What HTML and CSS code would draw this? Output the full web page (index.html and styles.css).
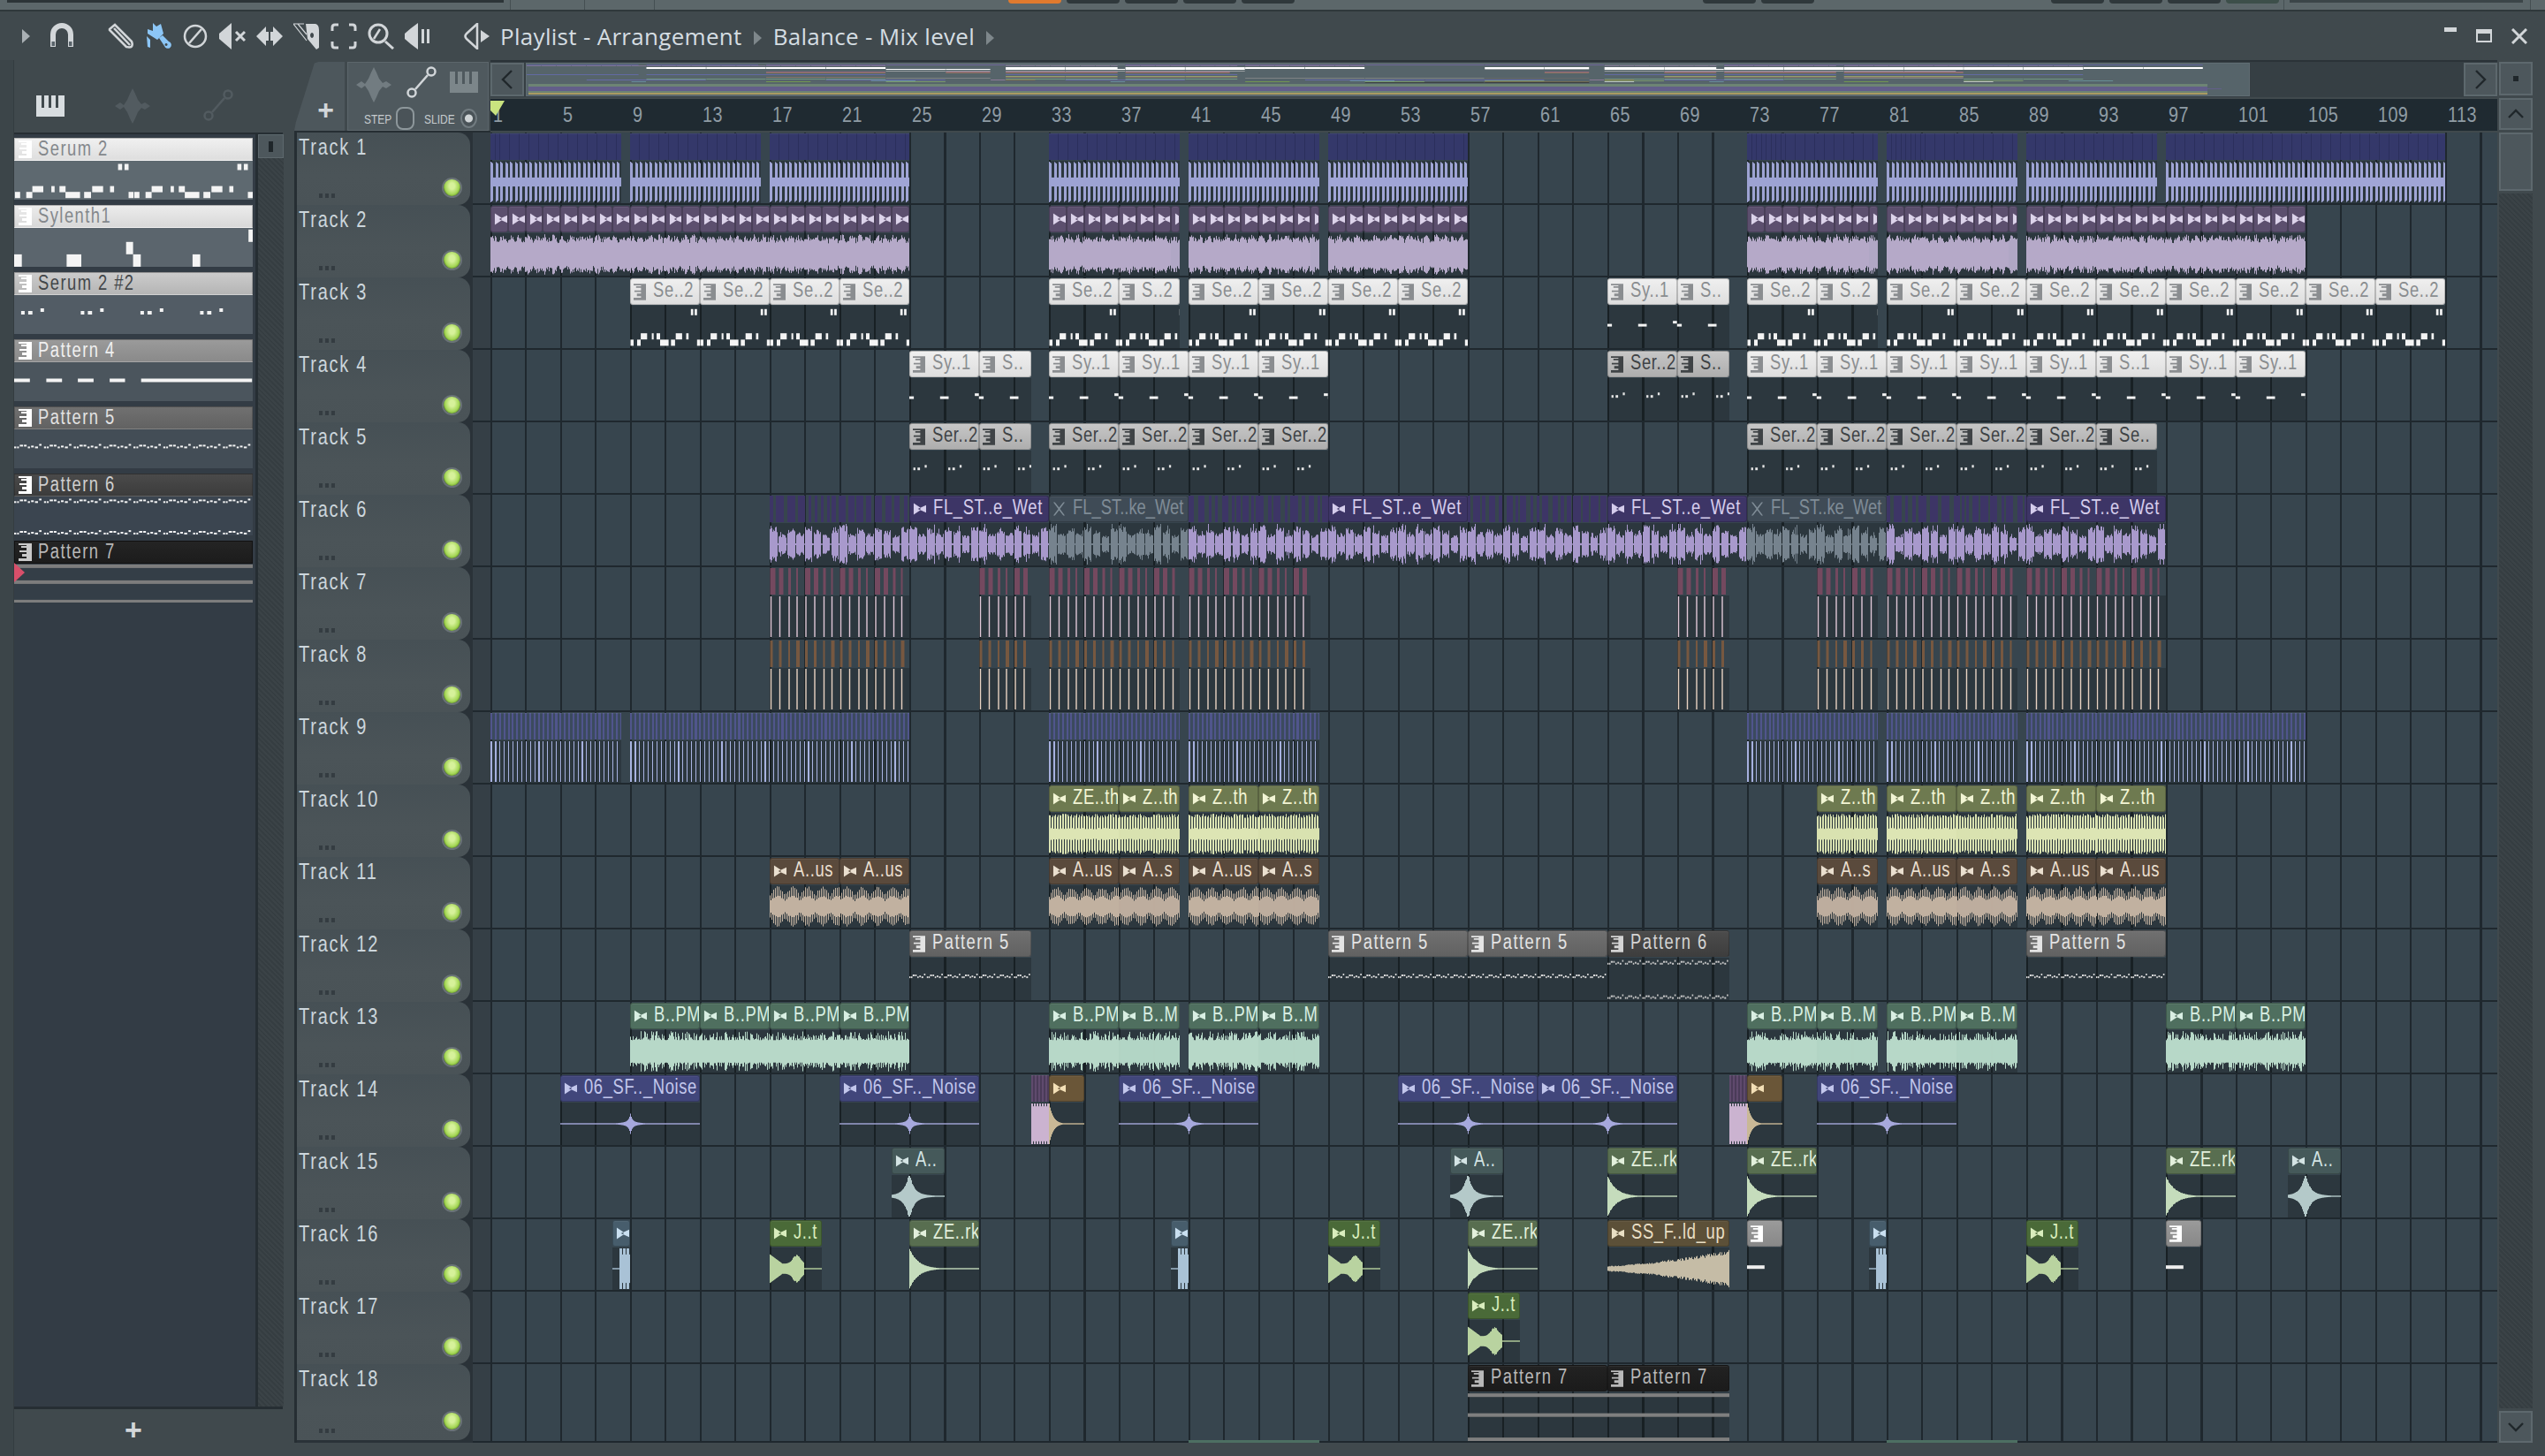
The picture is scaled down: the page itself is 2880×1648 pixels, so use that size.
FILE: index.html
```html
<!DOCTYPE html>
<html lang="en">
<head>
<meta charset="utf-8">
<title>Playlist - Arrangement</title>
<link rel="stylesheet" href="styles.css">
</head>
<body>
<svg class="defs" aria-hidden="true">
  <symbol id="i-audio" viewBox="0 0 16 16"><path d="M1 1V15L9 9.500V6.500ZM6 8 16 3.500V12.500Z"/></symbol>
  <symbol id="i-mute" viewBox="0 0 16 16"><path d="M1 0 3 0 8 6.500 13 0 15 0 9 8 15 16 13 16 8 9.500 3 16 1 16 7 8Z"/></symbol>
  <symbol id="i-piano" viewBox="0 0 15 20"><path d="M9 0H15V20H0V17H9V15H4V12H9V10H1V8H9V5H3V3H9V2H0V0Z"/></symbol>
  <symbol id="i-keys" viewBox="0 0 32 24"><path d="M0 0H6V14H9V0H14V14H17V0H22V14H25V0H32V24H0Z"/></symbol>
  <symbol id="i-wave" viewBox="0 0 40 40"><path d="M0 20 6 16 10 19 14 13 17 6 20 0 23 6 26 13 30 18 34 16 40 20 34 24 30 22 26 27 23 34 20 40 17 34 14 27 10 21 6 24Z"/></symbol>
  <symbol id="i-link" viewBox="0 0 34 36"><circle cx="6" cy="30" r="4.500"/><circle cx="28" cy="6" r="4.500"/><path d="M10 26 24 10"/></symbol>
</svg>
<div class="app">
  <div class="topstrip">
    <span class="inset inset-left"></span>
    <span class="sep sep-a"></span>
    <span class="sep sep-b"></span>
    <span class="sep sep-c"></span>
    <span class="tb tb-orange"></span><span class="tb"></span><span class="tb"></span><span class="tb"></span><span class="tb"></span>
    <span class="tb tb-far"></span><span class="tb"></span>
    <span class="tb tb-far2"></span><span class="tb"></span><span class="tb"></span><span class="tb tb-green"></span>
    <span class="sep sep-d"></span>
    <span class="inset inset-right"></span>
    <span class="sep sep-e"></span>
  </div>
  <header class="titlebar">
    <svg class="ic-caret" viewBox="0 0 9 16"><path d="M0 0 9 8 0 16Z"/></svg>
    <svg class="ic ic-magnet" viewBox="0 0 30 30"><path class="st6" d="M5 27V13a10 10 0 0 1 20 0V27"/><path class="hole" d="M3.500 21H7V26H3.500ZM23 21H26.500V26H23Z"/></svg>
    <div class="toolset">
      <svg class="ic" viewBox="0 0 30 30"><path class="st2" d="M2 7 8 2 27 21Q30 29 21 27L2 8ZM7 6 25 25"/></svg>
      <svg class="ic ic-blue" viewBox="0 0 30 30"><path d="M9 0 13 4 18 1 21 12 14 19 3 12 3 7 9 9ZM2 15 6 19 6 28 3 27ZM16 17 20 14 27 21A4 4 0 1 1 22 26ZM24 23A1.500 1.500 0 1 0 24.100 23Z"/></svg>
      <svg class="ic" viewBox="0 0 30 30"><circle class="st2" cx="15" cy="15" r="12"/><path class="st2" d="M22 7 8 23"/></svg>
      <svg class="ic" viewBox="0 0 30 30"><path d="M0 12 7 6 14 0V30L7 24 0 18Z"/><path class="st3" d="M19 10 29 20M29 10 19 20"/></svg>
      <svg class="ic" viewBox="0 0 30 30"><path d="M0 15 11 4V10H14V20H11V26ZM30 15 19 4V10H16V20H19V26Z"/></svg>
      <svg class="ic" viewBox="0 0 30 30"><path d="M14 1H25Q29 2 29 8V28L26 30 16 18ZM21 11A2 3 0 1 0 21.100 11Z" fill-rule="evenodd"/><path class="st1" d="M0 1H12M0 1 15 20M5 1 15 13"/></svg>
      <svg class="ic" viewBox="0 0 30 30"><path class="st3" d="M2 9V5Q2 2 5 2H9M21 2H25Q28 2 28 5V9M28 21V25Q28 28 25 28H21M9 28H5Q2 28 2 25V21"/></svg>
      <svg class="ic" viewBox="0 0 30 30"><circle class="st3" cx="12" cy="12" r="10"/><path class="st2" d="M7 18 14 7"/><path class="st3" d="M20 21 29 29"/></svg>
      <svg class="ic" viewBox="0 0 30 30"><path d="M0 12 7 6 15 0V30L7 24 0 18ZM19 7H22V23H19ZM25 7H28V23H25Z"/></svg>
    </div>
    <svg class="ic ic-output" viewBox="0 0 30 30"><path class="st2" d="M16 1 4 12Q1 15 4 18L16 29Z"/><path d="M20 8 30 15 20 22Z"/></svg>
    <span class="crumb">Playlist - Arrangement</span>
    <svg class="crumb-arrow" viewBox="0 0 9 16"><path d="M0 0 9 8 0 16Z"/></svg>
    <span class="crumb">Balance - Mix level</span>
    <svg class="crumb-arrow" viewBox="0 0 9 16"><path d="M0 0 9 8 0 16Z"/></svg>
    <div class="winbtns">
      <span class="win-min"></span>
      <span class="win-max"></span>
      <svg class="win-close" viewBox="0 0 18 18"><path d="M1 1 17 17M17 1 1 17"/></svg>
    </div>
  </header>
  <div class="work">
    <aside class="picker">
      <div class="picker-tools">
        <svg class="pt pt-keys"><use href="#i-keys"/></svg>
        <svg class="pt pt-wave"><use href="#i-wave"/></svg>
        <svg class="pt pt-link"><use href="#i-link"/></svg>
      </div>
      <div class="picker-list">
        <div class="items" id="items"></div>
        <div class="items-scroll"><div class="scroll-cap"><span></span></div></div>
      </div>
      <div class="picker-add">+</div>
    </aside>
    <main class="playlist">
      <div class="tabs">
        <div class="tab-plus">+</div>
        <div class="tab-tools">
          <div class="tab-icons">
            <svg class="tt tt-wave"><use href="#i-wave"/></svg>
            <svg class="tt tt-link"><use href="#i-link"/></svg>
            <svg class="tt tt-keys"><use href="#i-keys"/></svg>
          </div>
          <div class="tab-modes">
            <span class="mode">STEP</span><i class="check"></i><span class="mode slide">SLIDE</span><i class="radio"></i>
          </div>
        </div>
      </div>
      <div class="navrow">
        <button class="navbtn" type="button"><svg viewBox="0 0 14 24"><path d="M12 2 2 12 12 22"/></svg></button>
        <div class="minimap"><svg id="mini" width="1951" height="40" viewBox="0 0 1951 40"></svg></div>
        <div class="navfill"></div>
        <button class="navbtn" type="button"><svg viewBox="0 0 14 24"><path d="M2 2 12 12 2 22"/></svg></button>
      </div>
      <div class="ruler" id="ruler"></div>
      <div class="tracks" id="tracks"></div>
      <div class="lanes" id="lanes"></div>
      <div class="vscroll">
        <div class="vbtn vbtn-dot"><span></span></div>
        <div class="vbtn vbtn-up"><svg viewBox="0 0 20 12"><path d="M2 10 10 2 18 10"/></svg></div>
        <div class="vthumb"></div>
        <div class="vtrack"></div>
        <div class="vbtn vbtn-down"><svg viewBox="0 0 20 12"><path d="M2 2 10 10 18 2"/></svg></div>
      </div>
    </main>
  </div>
</div>
<script src="script.js"></script>
</body>
</html>
```
FILE: styles.css
```css
* { box-sizing: border-box; }
html, body { margin: 0; padding: 0; background: #40494d; }
body { width: 2880px; height: 1648px; overflow: hidden; font-family: "Liberation Sans", sans-serif; }
.defs { position: absolute; width: 0; height: 0; }
.app { width: 2880px; height: 1648px; display: flex; flex-direction: column; }

.topstrip { height: 13px; background: #5c676a; border-bottom: 2px solid #2f383b; display: flex; align-items: flex-start; flex: none; }
.inset { height: 3px; background: #2c3437; display: block; flex: none; }
.inset-left { width: 562px; margin-left: 8px; }
.inset-right { width: 264px; margin-left: 6px; height: 3px; background: #3b4548; }
.sep { width: 1px; height: 11px; background: #454f52; flex: none; }
.sep-a { margin-left: 7px; }
.sep-b { margin-left: 83px; }
.sep-c { margin-left: 78px; }
.sep-d { margin-left: 5px; }
.sep-e { margin-left: 8px; }
.tb { width: 60px; height: 4px; margin-left: 6px; background: #2f383b; border-radius: 0 0 5px 5px; flex: none; }
.tb-orange { background: #e07a2e; margin-left: 400px; }
.tb-far { margin-left: 462px; }
.tb-far2 { margin-left: 268px; }
.tb-green { background: #3d4f4a; }

.titlebar { height: 55px; flex: none; display: flex; align-items: center; padding-left: 25px; color: #d5dde2; }
.titlebar svg { fill: #d2d6d9; flex: none; }
.ic-caret { width: 9px; height: 16px; margin-right: 21px; fill: #a9b0b4 !important; }
.ic { width: 30px; height: 30px; }
.ic path.st1, .ic path.st2, .ic circle.st2, .ic path.st3, .ic circle.st3, .ic path.st6 { fill: none; stroke: #d2d6d9; }
.ic .st1 { stroke-width: 1.200; }
.ic .st2 { stroke-width: 2.500; }
.ic .st3 { stroke-width: 3; }
.ic .st6 { stroke-width: 6; }
.ic .hole { fill: #59636a; }
.ic-magnet { margin-right: 37px; }
.toolset { display: flex; gap: 12px; }
.ic-blue path { fill: #8cc6f6; }
.ic-output { margin-left: 36px; margin-right: 12px; }
.crumb { font-family: "Open Sans", "Liberation Sans", sans-serif; font-size: 26px; line-height: 30px; white-space: nowrap; letter-spacing: .3px; }
.crumb-arrow { width: 9px; height: 16px; margin: 4px 13px 0; fill: #7e878b !important; }
.winbtns { margin-left: auto; margin-right: 20px; display: flex; align-items: center; gap: 22px; }
.win-min { width: 14px; height: 5px; background: #d2d6d9; margin-bottom: 14px; }
.win-max { width: 18px; height: 15px; border: 2px solid #d2d6d9; border-top-width: 5px; }
.win-close { width: 18px; height: 18px; fill: none !important; stroke: #d2d6d9; stroke-width: 3; }

.work { flex: 1; display: flex; min-height: 0; }

.picker { width: 333px; flex: none; padding-left: 16px; display: flex; flex-direction: column; background: linear-gradient(90deg, #3c4549 0 15px, #343c40 15px 16px, #40494d 16px); }
.picker-tools { height: 82px; flex: none; display: flex; align-items: flex-start; padding: 40px 0 0 25px; }
.pt-keys { width: 32px; height: 24px; fill: #d8dde0; }
.pt-wave { width: 40px; height: 40px; margin: -8px 0 0 57px; fill: #525b60; }
.pt-link { width: 34px; height: 36px; margin: -7px 0 0 60px; fill: none; stroke: #525b60; stroke-width: 2.500; }
.picker-list { height: 1445px; width: 304px; flex: none; display: flex; border-top: 2px solid #262e33; border-bottom: 3px solid #262e33; border-right: 2px solid #262e33; background: #333c45; position: relative; }
.items { width: 270px; flex: none; }
.items-scroll { width: 32px; flex: none; border-left: 3px solid #262e33; background: repeating-linear-gradient(45deg, #3b4347 0 2px, #353d41 2px 4px); margin-left: 3px; }
.scroll-cap { height: 27px; background: #4d575c; border: 1px solid #5d686d; display: flex; align-items: center; justify-content: center; }
.scroll-cap span { width: 5px; height: 12px; background: #1f262a; }
.picker-add { flex: 1; width: 270px; padding-bottom: 6px; display: flex; align-items: center; justify-content: center; color: #d2d6d9; font: bold 34px "Liberation Sans", sans-serif; }

.lbl { display: inline-block; transform: scaleX(.8); transform-origin: 0 50%; white-space: nowrap; }

.item { height: 76px; padding-top: 4px; }
.item-head { height: 26px; display: flex; align-items: center; padding-left: 4px; gap: 7px; font-size: 23px; letter-spacing: 1.800px; border: 1px solid rgba(0,0,0,.18); border-bottom-color: rgba(255,255,255,.12); overflow: hidden; padding-bottom: 2px; }
.item-head svg { width: 15px; height: 20px; flex: none; fill: currentColor; }
.item-icon { color: #fff; display: flex; padding-top: 2px; }
.item-body { display: block; width: 270px; height: 44px; }
.ih-1 { background: linear-gradient(#f0f0f0, #dedede); color: #84888c; }
.ih-2 { background: linear-gradient(#ececec, #d8d8d8); color: #84888c; }
.ih-3 { background: linear-gradient(#cbcbcb, #b5b5b5); color: #43474a; }
.ih-4 { background: linear-gradient(#9a9a9a, #8a8a8a); color: #f0f0f0; }
.ih-5 { background: linear-gradient(#707070, #626262); color: #e2e2e2; }
.ih-6 { background: linear-gradient(#4a4a4a, #3c3c3c); color: #cfcfcf; }
.ih-7 { background: linear-gradient(#242424, #1c1c1c); color: #b8b8b8; border-color: #111; }
.ih-7 .item-icon { color: #c9c9c9; }
.ib-1 { background: #5e6970; }
.ib-2 { background: #5b656d; }
.ib-3 { background: #525c65; }
.ib-4 { background: #4b555d; }
.ib-5 { background: #434d56; }
.ib-6 { background: #3b4550; }
.ib-7 { background: #343e47; }
.item-marker { position: absolute; left: 0; top: 485px; width: 12px; height: 22px; background: #d84f6a; clip-path: polygon(0 0, 100% 50%, 0 100%); }

.playlist { flex: 1; display: grid; grid-template-columns: 222px 2271px 2px 38px 14px; grid-template-rows: 44px 38px 1483px 1fr; min-width: 0; }
.tabs { grid-column: 1; grid-row: 1 / span 2; display: flex; padding-top: 2px; gap: 3px; border-bottom: 2px solid #262e33; }
.tab-plus { width: 57px; background: #4d575c; clip-path: polygon(0 100%, 3% 88%, 40% 2%, 48% 0, 100% 0, 100% 100%); color: #d2d6d9; font: bold 32px "Liberation Sans", sans-serif; display: flex; align-items: flex-end; justify-content: center; padding: 0 0 7px 14px; line-height: 34px; }
.tab-tools { width: 160px; background: #4f595e; border: 1px solid #5c666b; display: flex; flex-direction: column; padding: 5px 0 0 0; }
.tab-icons { display: flex; align-items: flex-start; height: 46px; padding-left: 9px; }
.tt-wave { width: 40px; height: 40px; fill: #727c81; }
.tt-link { width: 34px; height: 36px; margin-left: 17px; fill: none; stroke: #d2d6d9; stroke-width: 2.500; margin-top: -1px; }
.tt-keys { width: 32px; height: 24px; margin-left: 15px; margin-top: 5px; fill: #7c868a; }
.tab-modes { display: flex; align-items: center; height: 26px; padding-left: 18px; color: #c5cbce; font-size: 15px; }
.mode { width: 31px; flex: none; display: block; transform: scaleX(.8); transform-origin: 0 50%; white-space: nowrap; }
.check { width: 21px; height: 26px; flex: none; border: 2px solid #8d979b; border-radius: 8px; margin-left: 5px; background: #4a5358; }
.slide { margin-left: 11px; width: 32px; }
.radio { width: 19px; height: 22px; flex: none; border-radius: 50%; border: 2px solid #727c81; margin-left: 9px; background: radial-gradient(circle, #cfd4d6 0 4px, #4a5358 5px); }

.navrow { grid-column: 2; grid-row: 1; display: flex; height: 42px; background: #363f44; border-top: 2px solid #2b3338; }
.navbtn { width: 38px; height: 38px; margin: 1px 0 0; padding: 0; background: #4d575c; border: 2px solid #5d686d; display: flex; align-items: center; justify-content: center; flex: none; }
.navbtn svg, .vbtn svg { width: 14px; height: 24px; fill: none; stroke: #20272b; stroke-width: 2.400; }
.minimap { width: 1951px; height: 38px; margin: 1px 0 0 2px; background: #56646a; border: 1px solid #5f6c72; overflow: hidden; flex: none; }
.minimap svg { display: block; }
.navfill { flex: 1; }

.ruler { grid-column: 2; grid-row: 2; height: 36px; background: #1f2a31; display: flex; position: relative; color: #8f9ca5; font-size: 23px; line-height: 36px; }
.tick { flex: 0 0 79px; padding-left: 3px; }
.tick .lbl { transform: scaleX(.86); letter-spacing: .5px; }
.marker { position: absolute; left: 0; top: 2px; width: 16px; height: 17px; background: #c9e37f; clip-path: polygon(0 0, 100% 0, 38% 100%, 0 65%); }

.tracks { grid-column: 1; grid-row: 3; display: flex; flex-direction: column; background: #2a3238; border-left: 3px solid #262e33; }
.track { height: 82px; flex: none; display: flex; background: #2a3238; }
.track-name { width: 196px; flex: none; position: relative; background: linear-gradient(#465055, #4b5458 60%, #4a5357); border-radius: 0 14px 14px 0; padding: 1px 0 0 2px; color: #ccd6dc; font-size: 25px; line-height: 30px; letter-spacing: 2.200px; }
.track-dots { position: absolute; left: 25px; bottom: 8px; display: flex; gap: 3px; }
.track-dots i { width: 4px; height: 5px; background: #343c41; }
.led { position: absolute; right: 9px; bottom: 8px; width: 23px; height: 23px; border-radius: 50%; border: 2px solid #6a7377; background: radial-gradient(ellipse at 50% 40%, #d6f19a 0 22%, #a4d655 58%, #7fb23a 68%, #1f2b14 80%); }
.track-strip { flex: 1; background: linear-gradient(#1f282e, #1f282e) bottom / 100% 2px no-repeat, #353f46; margin-left: 3px; }
.track-last { height: 89px; }
.track-last .led { bottom: 10px; }
.track-last .track-name { height: 86px; }

.lanes { grid-column: 2; grid-row: 3; display: flex; flex-direction: column; overflow: hidden; }
.lane { height: 82px; flex: none; position: relative; background:
    linear-gradient(#1f282e, #1f282e) left bottom / 100% 2px no-repeat,
    repeating-linear-gradient(90deg, #1f282e 0 2px, transparent 2px 39.500px),
    #37454e; }
.lane-last { height: 89px; }

.clip { position: absolute; top: 0; bottom: 2px; display: flex; flex-direction: column; --ls: .8px; }
.clip-head { height: 30px; flex: none; margin-top: 1px; background: var(--hd); border: 1px solid rgba(0,0,0,.2); border-radius: 3px; display: flex; align-items: center; overflow: hidden; padding: 0 0 3px 3px; gap: 8px; color: var(--fg); font-size: 23px; letter-spacing: var(--ls); white-space: nowrap; box-shadow: inset 0 1px 0 rgba(255,255,255,.06); }
.clip-head > svg { width: 15px; height: 16px; flex: none; fill: currentColor; margin-top: 3px; }
.clip-head.piano > svg { width: 14px; height: 19px; }
.clip-body { flex: 1; display: block; background: rgba(0,0,0,.2); margin-top: 1px; width: 100%; min-height: 0; }
.clip-body path { stroke: var(--wave); stroke-width: 1; fill: none; }
.clip-body path.thick { stroke-width: 1.400; }
.clip-body rect { fill: var(--wave); }
.clip-strip { height: 30px; flex: none; margin-top: 1px; display: block; width: 100%; }
.clip-strip rect { fill: var(--hd); }

.c-t1 { --hd: #34386a; --wave: #a0a5d6; }
.c-t2 { --hd: #5c4f6e; --fg: #dcd3ea; --wave: #b5a9c8; }
.c-wh { --hd: linear-gradient(#efefef, #dedede); --fg: #8a8d90; --wave: #f4f4f4; }
.c-gr { --hd: linear-gradient(#c6c6c6, #aeaeae); --fg: #3f4346; --wave: #e6e6e6; }
.c-t6 { --hd: #3d3566; --fg: #d5cdec; --wave: #a899cc; }
.c-mute { --hd: #3f4b56; --fg: #7f8c96; --wave: #76838e; --ls: 0; }
.c-t7 { --hd: #74495f; --wave: #e0c8d8; }
.c-t8 { --hd: #775840; --wave: #e8d3c3; }
.c-t9 { --hd: #474c82; --wave: #a9b4e2; }
.c-t10 { --hd: #6e7a50; --fg: #f2f5d4; --wave: #dde5b4; }
.c-t11 { --hd: #5a4a3c; --fg: #eadfcf; --wave: #c1b1a0; }
.c-p5 { --hd: linear-gradient(#707070, #626262); --fg: #e4e4e4; --wave: #d8d8d8; --ls: 1.800px; }
.c-p6 { --hd: linear-gradient(#4c4c4c, #3e3e3e); --fg: #d4d4d4; --wave: #c8c8c8; --ls: 1.800px; }
.c-p7 { --hd: linear-gradient(#222, #1b1b1b); --fg: #b8b8b8; --wave: #7f7f7f; --ls: 1.800px; }
.c-p4 { --hd: linear-gradient(#9a9a9a, #888); --fg: #fff; --wave: #eee; }
.c-t13 { --hd: #4f6f5f; --fg: #d9efe3; --wave: #b7d8c8; }
.c-t14 { --hd: #41467b; --fg: #c2c6ec; --wave: #a6a8dc; }
.c-pk { --hd: #5f4a6d; --wave: #cbb3d0; }
.c-br { --hd: #6a5638; --fg: #f3dfb6; --wave: #c9b896; }
.c-a { --hd: #45595a; --fg: #d4e4e4; --wave: #b4c9c9; }
.c-ze { --hd: #586e50; --fg: #e3f0dc; --wave: #c5dcbc; }
.c-j { --hd: #4a6a38; --fg: #d9edbd; --wave: #b9d3a0; }
.c-ss { --hd: #5c5038; --fg: #e9dfc4; --wave: #c5bca6; }
.c-bl { --hd: #475d6c; --fg: #c9dff0; --wave: #a9c2d6; }
.peek { top: auto; bottom: 0; height: 3px; background: #4d6f62; }

.head-t1 { background: repeating-linear-gradient(90deg, #34386a 0 4.900px, #2b2f5c 4.900px 5.500px); border: 0; border-radius: 0; }
.head-t9 { background: repeating-linear-gradient(90deg, #50558c 0 2px, #3b4a5e 2px 4.900px); border: 0; border-radius: 0; }
.head-pk { background: repeating-linear-gradient(90deg, #5f4a6d 0 2px, #4a3b58 2px 4px); border: 0; border-radius: 0; }

.vscroll { grid-column: 4; grid-row: 1 / span 3; display: flex; flex-direction: column; gap: 3px; padding-top: 2px; }
.vbtn { background: #4d575c; border: 2px solid #5d686d; display: flex; align-items: center; justify-content: center; flex: none; }
.vbtn svg { width: 20px; height: 12px; }
.vbtn-dot { height: 38px; }
.vbtn-dot span { width: 6px; height: 6px; background: #20272b; }
.vbtn-up { height: 36px; }
.vthumb { height: 66px; background: #4d575c; border: 2px solid #5d686d; flex: none; }
.vtrack { flex: 1; background: repeating-linear-gradient(45deg, #3b4347 0 2px, #353d41 2px 4px); }
.vbtn-down { height: 36px; }
```
FILE: script.js
```js
(function () {
  var BAR = 19.75;
  var seed = 7;
  function rnd() { seed = (seed * 16807) % 2147483647; return (seed & 0xffff) / 65536; }
  function svgIcon(id) { return '<svg><use href="#' + id + '"/></svg>'; }

  /* ---- pattern previews: notes are [startBar, endBar, yFrac, heightPx] ---- */
  function zs(list, origin, scale, y, h) {
    return list.map(function (n) { return [(n[0] - origin) * scale, (n[1] - origin) * scale, n[2] === undefined ? y : n[2], h]; });
  }
  var stipple = [[0, .07, 0], [.1, .16, 0], [.19, .3, -2], [.33, .42, -2], [.46, .53, 0], [.57, .66, -1], [.7, .8, 0], [.84, .92, -3]];
  function stip(y) { return stipple.map(function (n) { return [n[0], n[1], y + n[2] / 46, 2]; }); }
  var SYL = [[40, 62], [190, 232], [360, 380], [380, 402], [550, 572], [710, 722]];
  var SYLY = [.68, .68, .36, .68, .68, .04];
  var PATTERNS = {
    serum: { len: 4, notes: zs([[292, 302, .08], [308, 318, .08]], 35, 4 / 295, 0, 7).concat(
      zs([[37, 50, .8], [65, 80, .8], [80, 107, .65], [127, 135, .65], [147, 162, .65], [162, 198, .8], [208, 225, .8], [228, 255, .65], [272, 282, .65], [318, 330, .8]], 35, 4 / 295, 0, 7)) },
    syl: { len: 8, notes: zs(SYL.map(function (n, i) { return [n[0], n[1], SYLY[i]]; }), 40, 8 / 682, 0, 14) },
    sylClip: { len: 4, notes: zs(SYL.map(function (n, i) { return [n[0], n[1], .28 + SYLY[i] * .22]; }), 40, 8 / 682, 0, 3) },
    serum2: { len: 2, notes: zs([[60, 70, .41], [80, 92, .41], [115, 125, .34]], 40, 2 / 170, 0, 4) },
    serum2Clip: { len: 2, notes: zs([[60, 70, .4], [80, 92, .4], [115, 125, .34]], 40, 2 / 170, 0, 3) },
    p4: { len: 8, notes: zs([[40, 85], [132, 177], [222, 267], [313, 357], [403, 720]], 40, 8 / 682, .42, 4) },
    p4Clip: { len: 8, notes: [[0, 1, .42, 4]] },
    p5: { len: 1, notes: stip(.44) },
    p6: { len: 1, notes: stip(.12).concat(stip(.93)) },
    p7: { len: 8, notes: [[0, 8, .02, 4], [0, 8, .43, 4], [0, 8, .93, 4]] }
  };
  function patternRects(p, w, pxBar, h) {
    var out = '', loop = p.len * pxBar;
    for (var l = 0; l * loop < w; l++) {
      p.notes.forEach(function (n) {
        var x = l * loop + n[0] * pxBar, nw = Math.max(1.5, (n[1] - n[0]) * pxBar);
        if (x >= w) return;
        if (x + nw > w) nw = w - x;
        out += '<rect x="' + x.toFixed(1) + '" y="' + (n[2] * h).toFixed(1) + '" width="' + nw.toFixed(1) + '" height="' + n[3] + '"/>';
      });
    }
    return out;
  }

  /* ---- audio shapes: amplitude 0..1 per pixel column ---- */
  var WAVES = {
    fingers: function (x) { var p = (x % 5.5) / 5.5; return p < .5 ? 1 - .2 * p : .22; },
    dense: function (x) { var r = rnd(); return .62 + .08 * Math.sin(x / 1.57) + .3 * r; },
    comb: function (x) { return (x % 4.9) < 1.1 ? 1 : 0; },
    pulse: function (x) { return ((x % 3) < 1.5 ? 1 : .3) * (.8 + .2 * rnd()); },
    burst: function (x) { return (.55 + .45 * Math.abs(Math.sin(Math.PI * x / 17))) * (x % 2 < 1 ? 1 : .55) * (.85 + .15 * rnd()); },
    noise: function (x) { var r = rnd(); return .55 + .45 * r * r; },
    noiseHit: function (x, w) { var d = Math.abs(x - w / 2); return Math.max(.03, Math.exp(-d / 2) * .36 + Math.exp(-d / 11) * .14); },
    star: function (x, w) { var d = Math.abs(x - w * .33); return Math.max(.03, Math.exp(-d / 4.5) * (.85 + .15 * rnd()) + Math.exp(-d / 14) * .25); },
    decay: function (x) { return Math.max(.03, Math.exp(-x / 10) * (.9 + .1 * rnd())); },
    decayFast: function (x) { return Math.max(.03, Math.exp(-x / 4.5)); },
    jt: function (x) { if (x > 38) return .03; if (x < 14) return .7 - .032 * x; return .25 + .45 * Math.exp(-Math.pow((x - 30) / 6, 2)) * (.8 + .2 * rnd()); },
    riser: function (x, w) { return (.14 + .8 * Math.pow(x / w, 1.4)) * (.72 + .28 * rnd()); },
    solid: function (x) { return x % 3 < 2 ? 1 : .86; },
    sliver: function (x, w) { return x > w * .4 ? (x % 4 < 3 ? 1 : .7) : .03; },
    fl: function (x) {
      var i = Math.floor(x / 9.875), f = (x % 9.875) / 9.875;
      var gate = [1, .55, .85, .6, 1, .75, .5, .9][i % 8];
      return Math.max(.03, (f < .85 ? 1 : .06) * gate * (.62 + .38 * rnd()) * (rnd() > .9 ? 1.3 : .95));
    }
  };
  function wavePath(kind, w, h) {
    var fn = WAVES[kind], d = '', mid = h / 2, amp = h / 2 - 1;
    for (var x = 0; x < w; x++) {
      var a = Math.min(1, fn(x, w));
      if (a <= 0) continue;
      var t = Math.max(.5, a * amp);
      d += 'M' + (x + .5) + ' ' + (mid - t).toFixed(1) + 'V' + (mid + t).toFixed(1);
    }
    return '<path d="' + d + '"/>';
  }
  function hitsPath(w, h, widths) {
    var d = '', rects = '', i = 0;
    for (;; i++) {
      var x = [0, 10, 20.5, 29.5][i % 4] + 39.5 * Math.floor(i / 4) + .5;
      if (x >= w) break;
      rects += '<rect x="' + x + '" y="0" width="' + widths[i % 4] + '" height="30"/>';
      d += 'M' + (x + 1) + ' 1V' + (h - 1);
    }
    return { rects: rects, wave: '<path class="thick" d="' + d + '"/>' };
  }
  function flRects(w) {
    var r = '', x = 0;
    while (x < w) {
      var n = 3 + Math.floor(rnd() * 7);
      r += '<rect x="' + x.toFixed(1) + '" y="0" width="' + n + '" height="30"/>';
      x += n + 2 + Math.floor(rnd() * 4);
    }
    return r;
  }

  /* ---- clip data: [startBar, endBar, label, style, kind] ---- */
  function seq(style, kind, list) {
    return list.map(function (c) { return [c[0], c[1], c[2], style, kind]; });
  }
  function range(a, b, step, label) { var o = []; for (var i = a; i < b; i += step) o.push([i, Math.min(b, i + step), label]); return o; }
  var SE = 'Se..2', SY = 'Sy..1', SR = 'Ser..2', ZT = 'Z..th', AU = 'A..us', AS = 'A..s', BP = 'B..PM', BM = 'B..M', NO = '06_SF.._Noise', ZR = 'ZE..rk', JT = 'J..t';
  var FL = 'FL_ST..e_Wet', FM = 'FL_ST..ke_Wet';
  var TRACKS = [
    [[0, 7.5], [8, 15.5], [16, 24], [32, 39.5], [40, 47.5], [48, 56], [72, 79.5], [80, 87.5], [88, 95.5], [96, 112]].map(function (r) { return [r[0], r[1], null, 'c-t1', 'fingers', 'head-t1']; }),
    seq('c-t2', 'dense', range(0, 24, 1, '').concat(range(32, 39.5, 1, ''), range(40, 47.5, 1, ''), range(48, 56, 1, ''), range(72, 79.5, 1, ''), range(80, 87.5, 1, ''), range(88, 104, 1, ''))),
    seq('c-wh', 'p:serum', [[8, 12, SE], [12, 16, SE], [16, 20, SE], [20, 24, SE], [32, 36, SE], [36, 39.5, 'S..2'], [40, 44, SE], [44, 48, SE], [48, 52, SE], [52, 56, SE]]).concat(
      seq('c-wh', 'p:sylClip', [[64, 68, SY], [68, 71, 'S..']]),
      seq('c-wh', 'p:serum', [[72, 76, SE], [76, 79.5, 'S..2'], [80, 84, SE], [84, 88, SE], [88, 92, SE], [92, 96, SE], [96, 100, SE], [100, 104, SE], [104, 108, SE], [108, 112, SE]])),
    seq('c-wh', 'p:sylClip', [[24, 28, SY], [28, 31, 'S..'], [32, 36, SY], [36, 40, SY], [40, 44, SY], [44, 48, SY]]).concat(
      seq('c-gr', 'p:serum2Clip', [[64, 68, SR], [68, 71, 'S..']]),
      seq('c-wh', 'p:sylClip', [[72, 76, SY], [76, 80, SY], [80, 84, SY], [84, 88, SY], [88, 92, SY], [92, 96, 'S..1'], [96, 100, SY], [100, 104, SY]])),
    seq('c-gr', 'p:serum2Clip', [[24, 28, SR], [28, 31, 'S..'], [32, 36, SR], [36, 40, SR], [40, 44, SR], [44, 48, SR], [72, 76, SR], [76, 80, SR], [80, 84, SR], [84, 88, SR], [88, 92, SR], [92, 95.5, 'Se..']]),
    [[16, 24, null, 'c-t6', 'fl', 'fl'], [24, 32, FL, 'c-t6', 'fl'], [32, 40, FM, 'c-mute', 'fl'], [40, 48, null, 'c-t6', 'fl', 'fl'], [48, 56, FL, 'c-t6', 'fl'], [56, 64, null, 'c-t6', 'fl', 'fl'], [64, 72, FL, 'c-t6', 'fl'], [72, 80, FM, 'c-mute', 'fl'], [80, 88, null, 'c-t6', 'fl', 'fl'], [88, 96, FL, 'c-t6', 'fl']],
    [[16, 24], [28, 31], [32, 39.5], [40, 47], [68, 71], [76, 79.5], [80, 87.5], [88, 96]].map(function (r) { return [r[0], r[1], null, 'c-t7', 'hits', [6, 5, 3, 2]]; }),
    [[16, 24], [28, 31], [32, 39.5], [40, 47], [68, 71], [76, 79.5], [80, 87.5], [88, 96]].map(function (r) { return [r[0], r[1], null, 'c-t8', 'hits', [3, 3, 2, 4]]; }),
    [[0, 7.5], [8, 24], [32, 39.5], [40, 47.5], [72, 79.5], [80, 87.5], [88, 104]].map(function (r) { return [r[0], r[1], null, 'c-t9', 'comb', 'head-t9']; }),
    seq('c-t10', 'pulse', [[32, 36, 'ZE..th'], [36, 39.5, ZT], [40, 44, ZT], [44, 47.5, ZT], [76, 79.5, ZT], [80, 84, ZT], [84, 87.5, ZT], [88, 92, ZT], [92, 96, ZT]]),
    seq('c-t11', 'burst', [[16, 20, AU], [20, 24, AU], [32, 36, AU], [36, 39.5, AS], [40, 44, AU], [44, 47.5, AS], [76, 79.5, AS], [80, 84, AU], [84, 87.5, AS], [88, 92, AU], [92, 96, AU]]),
    seq('c-p5', 'p:p5', [[24, 31, 'Pattern 5'], [48, 56, 'Pattern 5'], [56, 64, 'Pattern 5'], [88, 96, 'Pattern 5']]).concat(seq('c-p6', 'p:p6', [[64, 71, 'Pattern 6']])),
    seq('c-t13', 'noise', [[8, 12, BP], [12, 16, BP], [16, 20, BP], [20, 24, BP], [32, 36, BP], [36, 39.5, BM], [40, 44, BP], [44, 47.5, BM], [72, 76, BP], [76, 79.5, BM], [80, 84, BP], [84, 87.5, BM], [96, 100, BP], [100, 104, BP]]),
    seq('c-t14', 'noiseHit', [[4, 12, NO], [20, 28, NO], [36, 44, NO], [52, 60, NO], [60, 68, NO], [76, 84, NO]]).concat(
      [[31, 32, null, 'c-pk', 'solid', 'head-pk'], [71, 72, null, 'c-pk', 'solid', 'head-pk']],
      seq('c-br', 'decayFast', [[32, 34, ''], [72, 74, '']])),
    seq('c-a', 'star', [[23, 26, 'A..'], [55, 58, 'A..'], [103, 106, 'A..']]).concat(seq('c-ze', 'decay', [[64, 68, ZR], [72, 76, ZR], [96, 100, ZR]])),
    seq('c-bl', 'sliver', [[7, 8, ''], [39, 40, ''], [79, 80, '']]).concat(
      seq('c-j', 'jt', [[16, 19, JT], [48, 51, JT], [88, 91, JT]]),
      seq('c-ze', 'decay', [[24, 28, ZR], [56, 60, ZR]]),
      seq('c-ss', 'riser', [[64, 71, 'SS_F..ld_up']]),
      seq('c-p4', 'p:p4Clip', [[72, 74, ''], [96, 98, '']])),
    seq('c-j', 'jt', [[56, 59, JT]]),
    seq('c-p7', 'p:p7', [[56, 64, 'Pattern 7'], [64, 71, 'Pattern 7']])
  ];

  function lbl(t) { return t ? '<span class="lbl">' + t + '</span>' : ''; }

  /* ---- sidebar ---- */
  var items = [['Serum 2', 'serum'], ['Sylenth1', 'syl'], ['Serum 2 #2', 'serum2'], ['Pattern 4', 'p4'], ['Pattern 5', 'p5'], ['Pattern 6', 'p6'], ['Pattern 7', 'p7']];
  document.getElementById('items').innerHTML = items.map(function (it, i) {
    var n = i + 1;
    return '<div class="item"><div class="item-head ih-' + n + '"><span class="item-icon">' + svgIcon('i-piano') + '</span>' + lbl(it[0]) + '</div>' +
      '<svg class="item-body ib-' + n + '" viewBox="0 0 270 44"><g fill="' + (n === 7 ? '#7d7d7d' : '#f4f4f4') + '">' + patternRects(PATTERNS[it[1]], 270, 33.75, 44) + '</g></svg></div>';
  }).join('') + '<div class="item-marker"></div>';

  /* ---- ruler ---- */
  var rh = '';
  for (var b = 1; b <= 113; b += 4) rh += '<span class="tick">' + lbl(String(b)) + '</span>';
  document.getElementById('ruler').innerHTML = rh + '<i class="marker"></i>';

  /* ---- tracks + lanes ---- */
  var th = '', lh = '';
  TRACKS.forEach(function (clips, i) {
    var last = i === TRACKS.length - 1;
    th += '<div class="track' + (last ? ' track-last' : '') + '"><div class="track-name">' + lbl('Track ' + (i + 1)) +
      '<span class="track-dots"><i></i><i></i><i></i></span><span class="led"></span></div><div class="track-strip"></div></div>';
    var lane = '';
    clips.forEach(function (c) {
      var w = (c[1] - c[0]) * BAR, left = c[0] * BAR, st = c[3], kind = c[4], extra = c[5];
      var H = last ? 54 : 48, body, head;
      var vb = '" viewBox="0 0 ' + w.toFixed(2) + ' ' + H + '" preserveAspectRatio="none">';
      if (kind === 'hits') {
        var hp = hitsPath(w, H, extra);
        head = '<svg class="clip-strip" viewBox="0 0 ' + w.toFixed(2) + ' 30">' + hp.rects + '</svg>';
        body = hp.wave;
      } else {
        if (extra === 'fl') head = '<svg class="clip-strip" viewBox="0 0 ' + w.toFixed(2) + ' 30">' + flRects(w) + '</svg>';
        else if (extra) head = '<div class="clip-head ' + extra + '"></div>';
        else if (kind.indexOf('p:') === 0) head = '<div class="clip-head piano">' + svgIcon('i-piano') + lbl(c[2]) + '</div>';
        else head = '<div class="clip-head">' + svgIcon(st === 'c-mute' ? 'i-mute' : 'i-audio') + lbl(c[2]) + '</div>';
        body = kind.indexOf('p:') === 0 ? patternRects(PATTERNS[kind.slice(2)], w, BAR, H) : wavePath(kind, w, H);
      }
      lane += '<div class="clip ' + st + '" style="left:' + left.toFixed(2) + 'px;width:' + w.toFixed(2) + 'px">' + head +
        '<svg class="clip-body' + vb + body + '</svg></div>';
    });
    if (last) {
      lane += '<div class="clip peek" style="left:' + (40 * BAR) + 'px;width:' + (7.5 * BAR) + 'px"></div>';
      lane += '<div class="clip peek" style="left:' + (80 * BAR) + 'px;width:' + (7.5 * BAR) + 'px"></div>';
    }
    lh += '<div class="lane' + (last ? ' lane-last' : '') + '">' + lane + '</div>';
  });
  document.getElementById('tracks').innerHTML = th;
  document.getElementById('lanes').innerHTML = lh;

  /* ---- minimap ---- */
  var MC = { 'c-t1': '#5f639a', 'c-t2': '#7d748e', 'c-wh': '#ffffff', 'c-gr': '#9ba0a3', 'c-t6': '#6f6698', 'c-mute': '#6f7a84', 'c-t7': '#90667f', 'c-t8': '#8d7560', 'c-t9': '#626aa2', 'c-t10': '#939e6c', 'c-t11': '#837668', 'c-p5': '#7f8385', 'c-p6': '#656869', 'c-p7': '#3a3f42', 'c-p4': '#b8bcbe', 'c-t13': '#719882', 'c-t14': '#656aa8', 'c-pk': '#8d7a98', 'c-br': '#82704c', 'c-a': '#678e94', 'c-ze': '#7a9a6e', 'c-j': '#729750', 'c-ss': '#726a50', 'c-bl': '#678ba0' };
  var MY = [1, 2, 4, 6, 8, 1, 9, 10, 12, 14, 15, 16, 17, 18, 19, 20, 21, 21];
  var m = '<rect x="2" y="23" width="1900" height="3" fill="#6d8474"/><rect x="2" y="26" width="1900" height="5" fill="#635e8a"/><rect x="2" y="31" width="1900" height="2" fill="#6d8474"/><rect x="2" y="33" width="1900" height="2" fill="#a99a62"/><rect x="1900" y="28" width="18" height="1" fill="#635e8a"/>';
  TRACKS.forEach(function (clips, i) {
    clips.forEach(function (c) {
      m += '<rect x="' + (c[0] * 16.94).toFixed(1) + '" y="' + MY[i] + '" width="' + ((c[1] - c[0]) * 16.94 - .5).toFixed(1) + '" height="' + (i === 2 ? 2 : 1) + '" fill="' + MC[c[3]] + '"/>';
    });
  });
  document.getElementById('mini').innerHTML = m;
})();
```
